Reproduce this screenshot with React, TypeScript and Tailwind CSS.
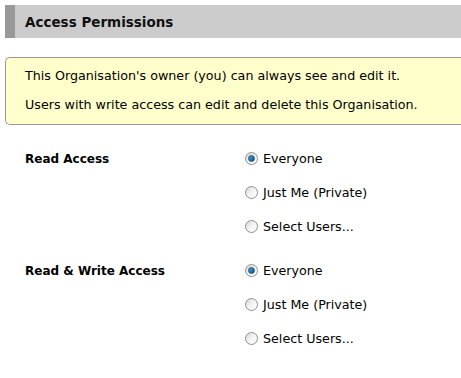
import React, { useState } from 'react';

type Choice = 'everyone' | 'private' | 'select';

const OPTIONS: { value: Choice; label: string }[] = [
  { value: 'everyone', label: 'Everyone' },
  { value: 'private', label: 'Just Me (Private)' },
  { value: 'select', label: 'Select Users...' },
];

const Radio: React.FC<{ checked: boolean }> = ({ checked }) => (
  <span className="relative inline-flex h-[13px] w-[13px] items-center justify-center rounded-full border border-[#8e8f8f] bg-gradient-to-br from-[#d6d6d6] via-[#f4f4f4] to-[#ffffff]">
    {checked && (
      <span className="h-[7px] w-[7px] rounded-full border border-[#1c5380] bg-gradient-to-br from-[#4aa6e0] to-[#0d4f86]"></span>
    )}
  </span>
);

const PermissionGroup: React.FC<{ title: string }> = ({ title }) => {
  const [value, setValue] = useState<Choice>('everyone');
  return (
    <div className="flex pl-[20px]">
      <div className="w-[220px] h-[34px] pt-[1px] flex items-center text-[12px] font-bold">{title}</div>
      <div className="flex flex-col">
        {OPTIONS.map(o => (
          <label
            key={o.value}
            onClick={() => setValue(o.value)}
            className="h-[34px] flex items-center gap-[5px] cursor-pointer"
          >
            <Radio checked={value === o.value} />
            <span className="pt-[1px]">{o.label}</span>
          </label>
        ))}
      </div>
    </div>
  );
};

const App: React.FC = () => {
  return (
    <div className="min-h-[378px] bg-white pl-[5px] pt-[5px] text-[12.7px] text-black" style={{ fontFamily: '"DejaVu Sans", Verdana, sans-serif' }}>
      {/* Section header */}
      <div className="h-[33px] flex items-center border-l-[10px] border-[#999999] bg-[#cccccc] pl-[10px] pt-[1px]">
        <h2 className="text-[13.5px] font-bold text-[#111]">Access Permissions</h2>
      </div>

      {/* Info box */}
      <div className="mt-[19px] rounded-l-[5px] border border-r-0 border-[#999999] bg-[#ffffcc] pl-[19px] pt-[8px] pb-[9px]">
        <p className="leading-[20px]">This Organisation's owner (you) can always see and edit it.</p>
        <p className="mt-[9px] leading-[20px]">Users with write access can edit and delete this Organisation.</p>
      </div>

      <div className="mt-[16px] flex flex-col gap-[10px]">
        <PermissionGroup title="Read Access" />
        <PermissionGroup title="Read & Write Access" />
      </div>
    </div>
  );
};

export default App;
